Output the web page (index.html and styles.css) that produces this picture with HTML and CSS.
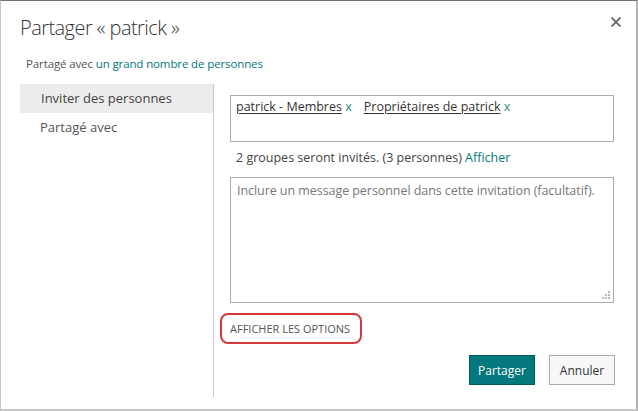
FILE: index.html
```html
<!DOCTYPE html>
<html lang="fr">
<head>
<meta charset="utf-8">
<title>Partager</title>
<link rel="stylesheet" href="styles.css">
</head>
<body>
<div class="dialog">
  <div class="header">
    <h1 class="title">Partager « patrick »</h1>
    <button class="close" aria-label="Fermer">
      <svg width="10" height="10" viewBox="0 0 10 10"><path d="M0.5 0.5 L9.5 9.5 M9.5 0.5 L0.5 9.5" stroke="#666" stroke-width="1.8" fill="none"/></svg>
    </button>
  </div>
  <div class="shared">Partagé avec <a class="link">un grand nombre de personnes</a></div>
  <div class="body">
    <nav class="nav">
      <div class="nav-item active">Inviter des personnes</div>
      <div class="nav-item">Partagé avec</div>
    </nav>
    <div class="panel">
      <div class="people">
        <span class="token"><u>patrick - Membres</u> <span class="x">x</span></span>
        <span class="token"><u>Propriétaires de patrick</u> <span class="x">x</span></span>
      </div>
      <div class="info">2 groupes seront invités. (3 personnes) <a class="link">Afficher</a></div>
      <div class="message">
        <span class="placeholder">Inclure un message personnel dans cette invitation (facultatif).</span>
        <svg class="grip" width="8" height="8" viewBox="0 0 8 8" fill="#bbb"><rect x="6" y="0" width="2" height="2"/><rect x="3" y="3" width="2" height="2"/><rect x="6" y="3" width="2" height="2"/><rect x="0" y="6" width="2" height="2"/><rect x="3" y="6" width="2" height="2"/><rect x="6" y="6" width="2" height="2"/></svg>
      </div>
      <div class="options-row"><span class="options">AFFICHER LES OPTIONS</span></div>
      <div class="actions">
        <button class="btn primary">Partager</button>
        <button class="btn">Annuler</button>
      </div>
    </div>
  </div>
</div>
</body>
</html>
```
FILE: styles.css
```css
html, body {
  margin: 0;
  padding: 0;
  background: #fff;
}
.dialog {
  width: 638px;
  height: 411px;
  box-sizing: border-box;
  border-top: 1px solid #707070;
  border-left: 1px solid #c4c4c4;
  border-right: 2px solid #b4b4b4;
  border-bottom: 2px solid #c8c8c8;
  font-family: "Open Sans", "Noto Sans", sans-serif;
  color: #444;
  display: flex;
  flex-direction: column;
}
.header {
  display: flex;
  justify-content: space-between;
  align-items: flex-start;
  padding: 0 15px 0 19px;
  height: 50px;
}
.title {
  margin: 13px 0 0;
  font-size: 20px;
  font-weight: 300;
  color: #333;
  letter-spacing: -0.55px;
}
.close {
  margin-top: 16px;
  padding: 0;
  border: 0;
  background: none;
  width: 10px;
  height: 10px;
  display: flex;
}
.shared {
  padding-left: 25px;
  font-size: 11.5px;
  letter-spacing: -0.12px;
  color: #555;
  height: 33px;
  line-height: 26px;
}
.link {
  color: #03787c;
}
.body {
  display: flex;
  margin-left: 19px;
  height: 313px;
}
.nav {
  width: 193px;
  border-right: 1px solid #c8c8c8;
  display: flex;
  flex-direction: column;
}
.nav-item {
  font-size: 13px;
  color: #555;
  padding-left: 20px;
  height: 29px;
  line-height: 29px;
}
.nav-item.active {
  background: #ececec;
  color: #444;
  padding-left: 21px;
}
.panel {
  flex: 1;
  padding: 11px 0 0 16px;
  display: flex;
  flex-direction: column;
}
.people {
  width: 384px;
  height: 47px;
  box-sizing: border-box;
  border: 1px solid #ababab;
  padding: 2px 5px;
  font-size: 12.5px;
  color: #333;
  display: flex;
  gap: 12px;
}
.token u {
  text-decoration-thickness: 1px;
  text-underline-offset: 2px;
}
.x {
  color: #2a8c8c;
}
.info {
  margin-top: 6px;
  height: 29px;
  font-size: 12.5px;
  color: #444;
  padding-left: 6px;
  line-height: 20px;
}
.message {
  width: 384px;
  height: 126px;
  box-sizing: border-box;
  border: 1px solid #ababab;
  padding: 4px 6px;
  font-size: 12.5px;
  letter-spacing: -0.06px;
  color: #777;
  position: relative;
}
.grip {
  position: absolute;
  right: 3px;
  bottom: 3px;
}
.options-row {
  margin-top: 10px;
  margin-left: -10px;
  display: flex;
}
.options {
  display: block;
  border: 2px solid #d43a3a;
  border-radius: 8px;
  height: 31px;
  box-sizing: border-box;
  line-height: 27px;
  padding: 0 0 0 8px;
  font-size: 11px;
  color: #555;
  width: 142px;
}
.actions {
  margin-top: 11px;
  display: flex;
  justify-content: flex-end;
  gap: 14px;
  width: 385px;
}
.btn {
  width: 66px;
  height: 30px;
  box-sizing: border-box;
  border: 1px solid #ababab;
  background: #f8f8f8;
  font-family: "Open Sans", "Noto Sans", sans-serif;
  font-size: 12px;
  color: #333;
  padding: 0;
}
.btn.primary {
  background: #03787c;
  border-color: #025c5e;
  color: #fff;
}
```
